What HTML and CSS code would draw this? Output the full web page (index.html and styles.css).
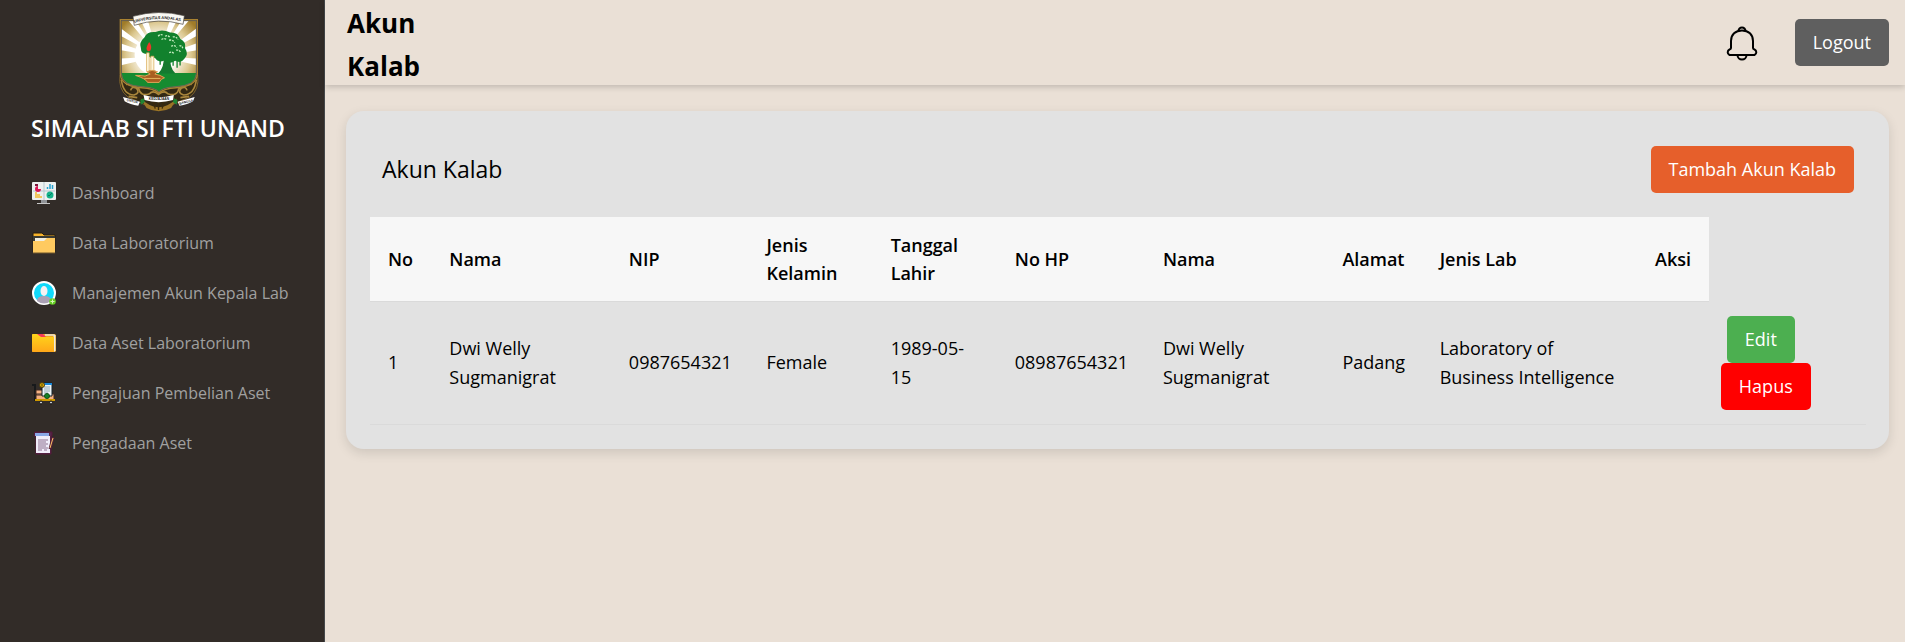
FILE: index.html
```html
<!DOCTYPE html>
<html lang="id">
<head>
<meta charset="utf-8">
<meta name="viewport" content="width=device-width, initial-scale=1">
<title>Akun Kalab</title>
<link rel="stylesheet" href="styles.css">
</head>
<body>
<div class="app">
  <aside class="sidebar">
    <div class="brand">
      <svg class="brand-logo" viewBox="50 36 244 298" role="img" aria-label="Universitas Andalas">
        <defs>
          <radialGradient id="glow" gradientUnits="userSpaceOnUse" cx="172" cy="165" r="140">
            <stop offset="0.35" stop-color="#fff"/><stop offset="0.7" stop-color="#dcc890"/><stop offset="1" stop-color="#a07c28"/>
          </radialGradient>
          <clipPath id="shield"><path d="M60 62H286V222Q284 258 222 261Q186 263 173 276Q160 263 124 261Q62 258 60 222Z"/></clipPath>
        </defs>
        <path d="M56 225Q50 270 80 292L120 310Q172 346 224 310L266 292Q296 270 290 225L240 262H106Z" fill="#332914" stroke="#80642c" stroke-width="3"/>
        <g fill="none" stroke="#aa873d" stroke-width="5">
          <path d="M60 240Q66 285 98 286Q118 280 106 266Q92 258 88 272M286 240Q280 285 248 286Q228 280 240 266Q254 258 258 272"/>
          <path d="M112 266Q118 292 145 282Q155 270 172 284Q190 270 200 282Q227 292 234 266M74 254Q92 250 116 270M272 254Q254 250 230 270M82 290l26 4M264 290l-26 4"/>
        </g>
        <path d="M118 296Q172 350 228 296L210 325Q172 345 136 325Z" fill="#9b7426"/>
        <path d="M172 306v25M157 306l5 21M188 306l-5 21" stroke="#3a2a0c" stroke-width="4"/>
        <g clip-path="url(#shield)">
          <path fill="url(#glow)" d="M55 55h240v225H55z"/>
          <g fill="#fff"><path d="M172 170L52 80v24zM172 170L52 128v22zM172 170L52 176v22zM172 170L70 48h25zM172 170L112 48h24zM172 170L294 80v24zM172 170L294 128v22zM172 170L294 176v22zM172 170L250 48h25zM172 170L210 48h24z"/><circle cx="160" cy="165" r="60"/></g>
          <path fill="#168b30" d="M55 220h240v60H55z"/>
          <path d="M188 165h19q-2 42 16 56h-52q19-16 17-56" fill="#157a30"/>
          <path d="M119 145Q112 128 130 112Q137 94 163 96Q184 86 207 98Q229 96 238 117Q256 126 252 145Q264 163 250 177Q240 192 222 183Q205 196 188 183Q170 189 161 174Q145 179 138 162Q119 163 119 145Z" fill="#12812d"/>
          <path d="M228 178v26M237 178v19M177 181v14M216 183v15" stroke="#12812d" stroke-width="4"/>
          <path d="M171 109q7-8 15-3M192 109q8-5 14 3M181 119q8-6 15 0M204 121q11-3 17 7M215 111q10-2 16 8M210 139q10-5 17 4M225 151q10-2 14 7M204 158q8-4 14 3M235 137q8 0 10 8" fill="none" stroke="#c6ecc1" stroke-width="4" stroke-dasharray="6 3"/>
        </g>
        <path d="M57 59H289V222Q287 261 225 264Q189 266 173 280Q157 266 121 264Q59 261 57 222Z" fill="none" stroke="#a98231" stroke-width="4"/>
        <path d="M60 62H286V222Q284 258 222 261Q186 263 173 276Q160 263 124 261Q62 258 60 222Z" fill="none" stroke="#6d6655" stroke-width="3"/>
        <path d="M136 159h8v56h-8zM149 169h9v46h-9z" fill="#fff7df" stroke="#d6a449" stroke-width="2"/>
        <path d="M144 126q10 13 4 25q-8 7-12-3q-1-8 8-22" fill="#ed3628"/>
        <path d="M113 227q20 6 34-4l-10-7q16-9 32 0l-8 7q16 2 29 11q-10 2-16 14h-35q-4-11-36-21Z" fill="#a95e21" stroke="#e0a457" stroke-width="3"/>
        <path d="M129 236h49" stroke="#e4b35e" stroke-width="3"/>
        <path d="M95 49Q172 27 250 47L246 73Q172 52 99 76Z" fill="#f9f8f3" stroke="#44403b" stroke-width="2"/>
        <path id="motto" d="M99 68Q172 47 248 66" fill="none"/>
        <text class="logo-name"><textPath href="#motto">UNIVERSITAS ANDALAS</textPath></text>
        <path d="M127 286Q172 300 218 286L216 301Q172 314 130 301Z" fill="#fff"/>
        <path d="M65 292L116 306L111 318Q86 315 70 305ZM281 292L230 306L235 318Q260 315 276 305Z" fill="#fff"/>
        <path d="M117 301l10-5 4 11-12 8M229 301l-10-5-4 11 12 8" fill="#208533"/>
        <text class="logo-motto" x="143" y="302">KEDJAJAAN</text>
        <text class="logo-motto" x="76" y="304" transform="rotate(12 76 304)">UNTUK</text>
        <text class="logo-motto" x="235" y="315" transform="rotate(-13 235 315)">BANGSA</text>
      </svg>
      <h2 class="brand-name">SIMALAB SI FTI UNAND</h2>
    </div>
    <nav class="menu">
      <a class="menu-link" href="#">
        <svg class="menu-icon" viewBox="0 0 24 24" aria-hidden="true"><path d="M9 19h6v3H9z" fill="#919498"/><path d="M5 22h13v1H5z" fill="#c7c7c7"/><rect y="1" width="24" height="18" rx="1" fill="#edf0ef"/><path d="M12 1v18M1 10h22" stroke="#b5c8d1"/><path d="M6 5v3h3a3 3 0 1 1-3-3" fill="#d91655"/><path d="M3 3h3v2H3z" fill="#7c1739"/><path d="M15.500 8V6M18 8V3M20.500 8V4" stroke="#25a1cf" stroke-width="1.500"/><path d="M3 12h2M3 14h5M3 16h7" stroke="#f3ba32" stroke-width="1.500"/><circle cx="18" cy="14" r="3.500" fill="#14b38a"/><path d="m16 14 1 1 3-3" fill="none" stroke="#0a7966"/></svg>
        <span>Dashboard</span>
      </a>
      <a class="menu-link" href="#">
        <svg class="menu-icon" viewBox="0 0 24 24" aria-hidden="true"><path d="M1 2h9l2 2h11v17H1z" fill="#f7b32b" stroke="#251d10"/><path d="M1 5h22v5H1z" fill="#3a3b34"/><path d="M3 7h19v4H3z" fill="#f0eee4"/><path d="M1 10h11l3-3h8v15H1z" fill="#ffca60"/><path d="M1 22h22" stroke="#6d542b"/></svg>
        <span>Data Laboratorium</span>
      </a>
      <a class="menu-link" href="#">
        <svg class="menu-icon" viewBox="0 0 24 24" aria-hidden="true"><circle cx="12" cy="12" r="11" fill="#10d9fa" stroke="#fff" stroke-width="2"/><ellipse cx="12" cy="10" rx="3.500" ry="5" fill="#f5f1f3"/><path d="M5 20q0-5 7-5t7 5q-7 5-14 0" fill="#aaa0b4"/><circle cx="20.500" cy="20.500" r="3.300" fill="#65ce22"/><path d="M20.500 18.500v4m-2-2h4" stroke="#d5f5b8"/></svg>
        <span>Manajemen Akun Kepala Lab</span>
      </a>
      <a class="menu-link" href="#">
        <svg class="menu-icon" viewBox="0 0 24 24" aria-hidden="true"><defs><linearGradient id="folder" x2="0" y2="1"><stop stop-color="#ffd51b"/><stop offset="1" stop-color="#ffa719"/></linearGradient></defs><rect y="3" width="24" height="18" rx="1.500" fill="#eea821"/><path d="M13 4h9v16h1V4z" fill="#fff" stroke="#e8e2d5"/><path d="M1 3h6l5 3h10v15H1q-1 0-1-1V4q0-1 1-1" fill="url(#folder)"/><path d="M5 3h6l3 3H9z" fill="#f43858"/></svg>
        <span>Data Aset Laboratorium</span>
      </a>
      <a class="menu-link" href="#">
        <svg class="menu-icon" viewBox="0 0 24 24" aria-hidden="true"><path d="M0 4h3v15h20" fill="none" stroke="#17191b" stroke-width="2"/><path d="M4 9h7v5H4zM4 13h18v6H4z" fill="#f5b183" stroke="#3c2922"/><path d="M10 2h10v13H10z" fill="#eef5f7" stroke="#17232b"/><path d="M11 2h9v2h-9z" fill="#1989db"/><path d="M12 6h6M12 8h6M12 10h6M12 12h4" stroke="#95abb5"/><circle cx="10" cy="4" r="2.500" fill="#e8b800" stroke="#493b12"/><path d="M10 2.500v3" stroke="#493b12"/><circle cx="15" cy="15" r="2.500" fill="#168425" stroke="#0c5316"/><path d="M3 19h20" stroke="#cf9900" stroke-width="2"/><circle cx="9" cy="21.500" r="1.500" fill="#ccc" stroke="#111"/><circle cx="19" cy="21.500" r="1.500" fill="#ccc" stroke="#111"/></svg>
        <span>Pengajuan Pembelian Aset</span>
      </a>
      <a class="menu-link" href="#">
        <svg class="menu-icon" viewBox="0 0 24 24" aria-hidden="true"><path d="M3 1h17v4h-1v18H4V5H2z" fill="#552748" stroke="#55193b"/><path d="M4 5h14v17H4z" fill="#f0edfa"/><path d="M3 2h14v3H3z" fill="#89a8e7"/><path d="M6 9h10M6 11h8M6 13h10M6 15h8M6 17h10M6 19h4M12 19h3" stroke="#8d718f"/><path d="m21 6-3 12" stroke="#53213a" stroke-width="3"/><path d="m21 7-3 10" stroke="#ffc264"/></svg>
        <span>Pengadaan Aset</span>
      </a>
    </nav>
  </aside>
  <div class="content">
    <header class="topbar">
      <h1 class="page-title">Akun Kalab</h1>
      <div class="topbar-actions">
        <button class="bell" type="button" aria-label="Notifikasi">
          <svg class="bell-icon" viewBox="0 0 36 36" aria-hidden="true"><g fill="none" stroke="#000" stroke-width="2" stroke-linejoin="round"><path d="M7 23V16C7 9.500 11.500 5.500 18 5.500S29 9.500 29 16v7q0 1 1.500 1.500a3 3 0 0 1 0 5.500h-25a3 3 0 0 1 0-5.500Q7 24 7 23z"/><path d="M14.500 6a3.500 3.500 0 0 1 7 0M13.500 30a4.500 4.500 0 0 0 9 0"/></g></svg>
        </button>
        <button class="btn btn-dark" type="button">Logout</button>
      </div>
    </header>
    <main class="main">
      <section class="card">
        <div class="card-head">
          <h2 class="card-title">Akun Kalab</h2>
          <button class="btn btn-add" type="button">Tambah Akun Kalab</button>
        </div>
        <table class="table">
          <colgroup>
            <col class="c-no"><col class="c-name"><col class="c-nip"><col class="c-sex"><col class="c-birth"><col class="c-phone"><col class="c-name"><col class="c-address"><col class="c-lab"><col class="c-action"><col>
          </colgroup>
          <thead>
            <tr><th>No</th><th>Nama</th><th>NIP</th><th>Jenis Kelamin</th><th>Tanggal Lahir</th><th>No HP</th><th>Nama</th><th>Alamat</th><th>Jenis Lab</th><th>Aksi</th></tr>
          </thead>
          <tbody>
            <tr><td>1</td><td>Dwi Welly Sugmanigrat</td><td>0987654321</td><td>Female</td><td>1989-05-<wbr>15</td><td>08987654321</td><td>Dwi Welly Sugmanigrat</td><td>Padang</td><td>Laboratory of Business Intelligence</td><td></td>
              <td class="actions-cell"><div class="actions"><button class="btn btn-edit" type="button">Edit</button><button class="btn btn-delete" type="button">Hapus</button></div></td></tr>
          </tbody>
        </table>
      </section>
    </main>
  </div>
</div>
</body>
</html>
```
FILE: styles.css
```css
* { box-sizing: border-box; }

body {
  margin: 0;
  background: #eae0d6;
  color: #000;
  font-family: "Open Sans", "Noto Sans", sans-serif;
  font-size: 18px;
  line-height: 29px;
}

h1, h2 { margin: 0; }

button {
  font: inherit;
  border: 0;
  cursor: pointer;
}

.app {
  display: flex;
  min-height: 100vh;
}

.sidebar {
  flex: 0 0 325px;
  background: #322c28;
  border-right: 1px solid #45484a;
}

.brand {
  display: flex;
  flex-direction: column;
  align-items: center;
  padding: 12px 16px 0 8px;
}

.brand-logo {
  width: 81px;
  height: 99px;
  overflow: visible;
}

.brand-name {
  color: #fff;
  font-size: 23px;
  font-weight: 600;
  line-height: 34px;
  white-space: nowrap;
}

.logo-name {
  font: bold 12px "Liberation Sans", sans-serif;
  fill: #171717;
}

.logo-motto {
  font: bold 10px "Liberation Sans", sans-serif;
  fill: #222;
}

.menu {
  display: flex;
  flex-direction: column;
  padding: 23px 16px;
}

.menu-link {
  display: flex;
  align-items: center;
  gap: 16px;
  height: 50px;
  padding: 0 16px;
  color: #a0a0a0;
  font-size: 16px;
  text-decoration: none;
  white-space: nowrap;
}

.menu-icon {
  flex: none;
  width: 24px;
  height: 24px;
}

.content {
  flex: 1;
  min-width: 0;
}

.topbar {
  display: flex;
  align-items: center;
  justify-content: space-between;
  padding: 0 16px 0 22px;
  box-shadow: 0 2px 6px rgba(0, 0, 0, 0.18);
}

.page-title {
  width: min-content;
  margin-bottom: -3px;
  padding-top: 2px;
  font-size: 26px;
  font-weight: 700;
  line-height: 43px;
}

.topbar-actions {
  display: flex;
  align-items: center;
  gap: 35px;
}

.bell {
  padding: 0;
  background: none;
}

.bell-icon {
  display: block;
  width: 36px;
  height: 36px;
}

.btn {
  padding: 9px 18px;
  border-radius: 5px;
  color: #fff;
  white-space: nowrap;
}

.btn-dark { background: #5f5f5f; }
.btn-add { background: #e65f2b; }
.btn-edit { background: #4caf50; margin-left: 6px; }
.btn-delete { background: #f00; }

.main { padding: 26px 16px 26px 21px; }

.card {
  padding: 35px 23px 24px 24px;
  background: #e2e2e2;
  border-radius: 18px;
  box-shadow: 0 4px 12px rgba(0, 0, 0, 0.12);
}

.card-head {
  display: flex;
  align-items: center;
  justify-content: space-between;
  padding: 0 12px 24px;
}

.card-title {
  font-size: 23px;
  font-weight: 500;
}

.table {
  width: 100%;
  table-layout: fixed;
  border-collapse: collapse;
}

.table th,
.table td {
  padding: 14px 18px;
  border-bottom: 1px solid #dadada;
  text-align: left;
  vertical-align: middle;
}

.table th {
  background: #f7f7f7;
  font-weight: 600;
  line-height: 28px;
}

.table .actions-cell { padding: 14px 12px; }

.actions {
  display: flex;
  flex-direction: column;
  align-items: flex-start;
}

.c-no { width: 4.1%; }
.c-name { width: 12%; }
.c-nip { width: 9.2%; }
.c-sex { width: 8.3%; }
.c-birth { width: 8.3%; }
.c-phone { width: 9.9%; }
.c-address { width: 6.5%; }
.c-lab { width: 14.4%; }
.c-action { width: 4.8%; }
```
